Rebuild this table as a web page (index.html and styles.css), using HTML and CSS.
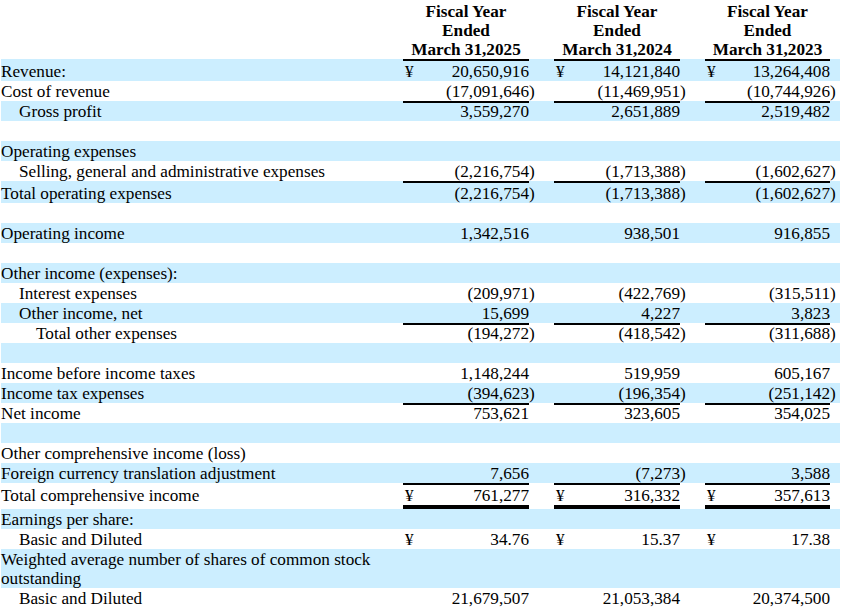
FILE: index.html
```html
<!DOCTYPE html>
<html lang="en">
<head>
<meta charset="utf-8">
<title>Consolidated Statements of Income</title>
<link rel="stylesheet" href="styles.css">
</head>
<body>
<table class="fin">
  <colgroup>
    <col class="c-lbl"><col class="c-sp"><col class="c-v"><col class="c-p">
    <col class="c-sp"><col class="c-v"><col class="c-p">
    <col class="c-sp"><col class="c-v3"><col class="c-p">
  </colgroup>
  <thead>
    <tr class="head">
      <th></th><th></th>
      <th class="yr">Fiscal Year<br>Ended<br>March 31,2025</th><th></th>
      <th></th>
      <th class="yr">Fiscal Year<br>Ended<br>March 31,2024</th><th></th>
      <th></th>
      <th class="yr">Fiscal Year<br>Ended<br>March 31,2023</th><th></th>
    </tr>
  </thead>
  <tbody>
    <tr class="hl b2">
      <td class="lbl">Revenue:</td><td></td>
      <td class="v"><span class="cur">¥</span>20,650,916</td><td class="p"></td><td></td>
      <td class="v"><span class="cur">¥</span>14,121,840</td><td class="p"></td><td></td>
      <td class="v"><span class="cur">¥</span>13,264,408</td><td class="p"></td>
    </tr>
    <tr>
      <td class="lbl">Cost of revenue</td><td></td>
      <td class="v">(17,091,646</td><td class="p">)</td><td></td>
      <td class="v">(11,469,951</td><td class="p">)</td><td></td>
      <td class="v">(10,744,926</td><td class="p">)</td>
    </tr>
    <tr class="hl ov">
      <td class="lbl i1">Gross profit</td><td></td>
      <td class="v">3,559,270</td><td class="p"></td><td></td>
      <td class="v">2,651,889</td><td class="p"></td><td></td>
      <td class="v">2,519,482</td><td class="p"></td>
    </tr>
    <tr><td class="lbl">&nbsp;</td><td colspan="9"></td></tr>
    <tr class="hl"><td class="lbl">Operating expenses</td><td colspan="9"></td></tr>
    <tr>
      <td class="lbl i1">Selling, general and administrative expenses</td><td></td>
      <td class="v">(2,216,754</td><td class="p">)</td><td></td>
      <td class="v">(1,713,388</td><td class="p">)</td><td></td>
      <td class="v">(1,602,627</td><td class="p">)</td>
    </tr>
    <tr class="hl b2">
      <td class="lbl">Total operating expenses</td><td></td>
      <td class="v">(2,216,754</td><td class="p">)</td><td></td>
      <td class="v">(1,713,388</td><td class="p">)</td><td></td>
      <td class="v">(1,602,627</td><td class="p">)</td>
    </tr>
    <tr><td class="lbl">&nbsp;</td><td colspan="9"></td></tr>
    <tr class="hl">
      <td class="lbl">Operating income</td><td></td>
      <td class="v">1,342,516</td><td class="p"></td><td></td>
      <td class="v">938,501</td><td class="p"></td><td></td>
      <td class="v">916,855</td><td class="p"></td>
    </tr>
    <tr><td class="lbl">&nbsp;</td><td colspan="9"></td></tr>
    <tr class="hl"><td class="lbl">Other income (expenses):</td><td colspan="9"></td></tr>
    <tr>
      <td class="lbl i1">Interest expenses</td><td></td>
      <td class="v">(209,971</td><td class="p">)</td><td></td>
      <td class="v">(422,769</td><td class="p">)</td><td></td>
      <td class="v">(315,511</td><td class="p">)</td>
    </tr>
    <tr class="hl">
      <td class="lbl i1">Other income, net</td><td></td>
      <td class="v">15,699</td><td class="p"></td><td></td>
      <td class="v">4,227</td><td class="p"></td><td></td>
      <td class="v">3,823</td><td class="p"></td>
    </tr>
    <tr class="ov">
      <td class="lbl i2">Total other expenses</td><td></td>
      <td class="v">(194,272</td><td class="p">)</td><td></td>
      <td class="v">(418,542</td><td class="p">)</td><td></td>
      <td class="v">(311,688</td><td class="p">)</td>
    </tr>
    <tr class="hl"><td class="lbl">&nbsp;</td><td colspan="9"></td></tr>
    <tr>
      <td class="lbl">Income before income taxes</td><td></td>
      <td class="v">1,148,244</td><td class="p"></td><td></td>
      <td class="v">519,959</td><td class="p"></td><td></td>
      <td class="v">605,167</td><td class="p"></td>
    </tr>
    <tr class="hl">
      <td class="lbl">Income tax expenses</td><td></td>
      <td class="v">(394,623</td><td class="p">)</td><td></td>
      <td class="v">(196,354</td><td class="p">)</td><td></td>
      <td class="v">(251,142</td><td class="p">)</td>
    </tr>
    <tr class="ov">
      <td class="lbl">Net income</td><td></td>
      <td class="v">753,621</td><td class="p"></td><td></td>
      <td class="v">323,605</td><td class="p"></td><td></td>
      <td class="v">354,025</td><td class="p"></td>
    </tr>
    <tr class="hl"><td class="lbl">&nbsp;</td><td colspan="9"></td></tr>
    <tr><td class="lbl">Other comprehensive income (loss)</td><td colspan="9"></td></tr>
    <tr class="hl">
      <td class="lbl">Foreign currency translation adjustment</td><td></td>
      <td class="v">7,656</td><td class="p"></td><td></td>
      <td class="v">(7,273</td><td class="p">)</td><td></td>
      <td class="v">3,588</td><td class="p"></td>
    </tr>
    <tr class="b2 dbl">
      <td class="lbl">Total comprehensive income</td><td></td>
      <td class="v"><span class="cur">¥</span>761,277</td><td class="p"></td><td></td>
      <td class="v"><span class="cur">¥</span>316,332</td><td class="p"></td><td></td>
      <td class="v"><span class="cur">¥</span>357,613</td><td class="p"></td>
    </tr>
    <tr class="hl"><td class="lbl">Earnings per share:</td><td colspan="9"></td></tr>
    <tr>
      <td class="lbl i1">Basic and Diluted</td><td></td>
      <td class="v"><span class="cur">¥</span>34.76</td><td class="p"></td><td></td>
      <td class="v"><span class="cur">¥</span>15.37</td><td class="p"></td><td></td>
      <td class="v"><span class="cur">¥</span>17.38</td><td class="p"></td>
    </tr>
    <tr class="hl"><td class="lbl">Weighted average number of shares of common stock outstanding</td><td colspan="9"></td></tr>
    <tr>
      <td class="lbl i1">Basic and Diluted</td><td></td>
      <td class="v">21,679,507</td><td class="p"></td><td></td>
      <td class="v">21,053,384</td><td class="p"></td><td></td>
      <td class="v">20,374,500</td><td class="p"></td>
    </tr>
  </tbody>
</table>
</body>
</html>
```

FILE: styles.css
```css
html, body {
  margin: 0;
  padding: 0;
  background: #ffffff;
}

body {
  font-family: "Liberation Serif", "Times New Roman", serif;
  font-size: 17.2px;
  color: #000000;
}

.fin {
  border-collapse: separate;
  border-spacing: 0;
  table-layout: fixed;
  width: 839px;
  margin-left: 1px;
}

.c-lbl { width: 387px; }
.c-sp { width: 15px; }
.c-v { width: 126px; }
.c-v3 { width: 125px; }
.c-p { width: 10px; }

.fin th,
.fin td {
  padding: 1px 0 0 0;
  line-height: 19px;
  vertical-align: baseline;
}

.head th {
  padding-top: 2px;
  vertical-align: bottom;
}

.yr {
  font-weight: bold;
  text-align: center;
  white-space: nowrap;
}

.hl {
  background: #cceeff;
}

.lbl {
  padding-left: 1px;
  text-align: left;
}

.fin td.i1 { padding-left: 18px; }
.fin td.i2 { padding-left: 35px; }

.v {
  text-align: right;
  white-space: nowrap;
}

.cur {
  float: left;
  padding-left: 2px;
}

.p {
  text-align: left;
  white-space: nowrap;
}

.b2 td.v {
  border-top: 2px solid #000000;
}

.ov td.v {
  background: linear-gradient(#000000, #000000) top left / 100% 2px no-repeat;
}

.dbl td.v {
  border-bottom: 4px solid #000000;
}
```
